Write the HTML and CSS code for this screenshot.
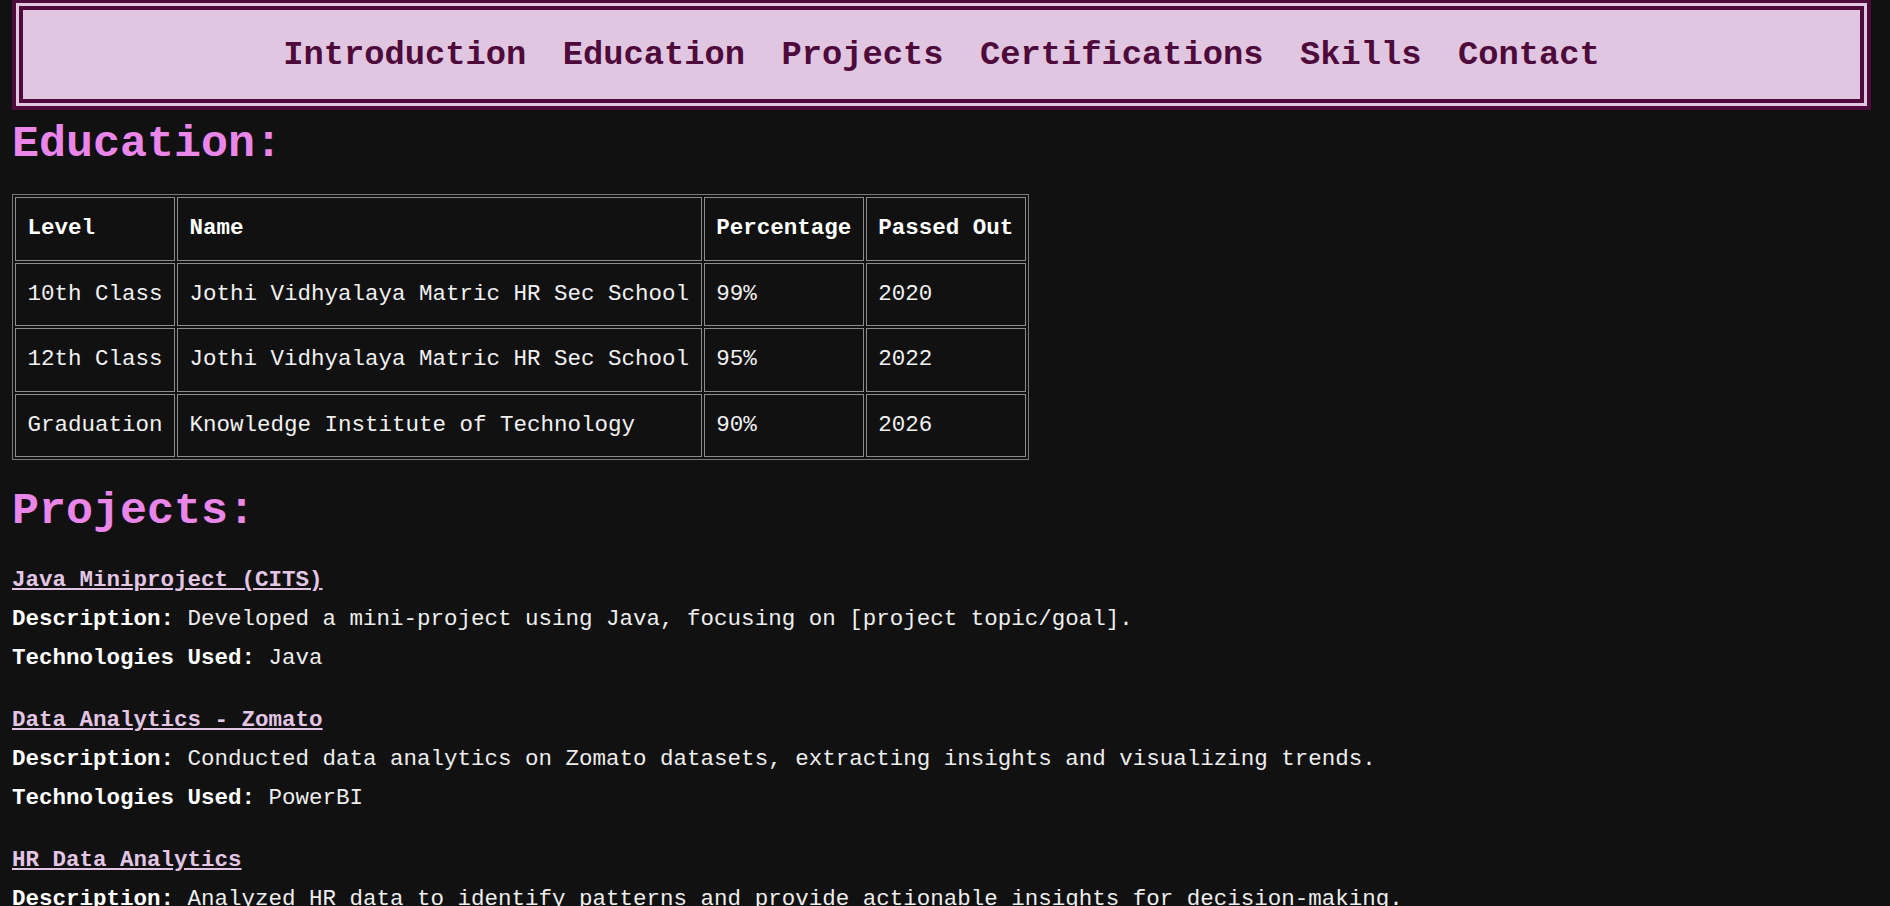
FILE: index.html
```html
<!DOCTYPE html>
<html lang="en">
<head>
<meta charset="utf-8">
<title>Portfolio</title>
<link rel="stylesheet" href="styles.css">
</head>
<body>
<header class="topbar">
  <nav class="nav">
    <a href="#intro">Introduction</a>
    <a href="#education">Education</a>
    <a href="#projects">Projects</a>
    <a href="#certifications">Certifications</a>
    <a href="#skills">Skills</a>
    <a href="#contact">Contact</a>
  </nav>
</header>
<main class="content">
  <section id="education" class="section section-education">
    <h2 class="section-title">Education:</h2>
    <table class="edu-table">
      <thead>
        <tr><th>Level</th><th>Name</th><th>Percentage</th><th>Passed Out</th></tr>
      </thead>
      <tbody>
        <tr><td>10th Class</td><td>Jothi Vidhyalaya Matric HR Sec School</td><td>99%</td><td>2020</td></tr>
        <tr><td>12th Class</td><td>Jothi Vidhyalaya Matric HR Sec School</td><td>95%</td><td>2022</td></tr>
        <tr><td>Graduation</td><td>Knowledge Institute of Technology</td><td>90%</td><td>2026</td></tr>
      </tbody>
    </table>
  </section>
  <section id="projects" class="section section-projects">
    <h2 class="section-title">Projects:</h2>
    <div class="project-list">
      <article class="project">
        <h3 class="project-title"><a href="#">Java Miniproject (CITS)</a></h3>
        <p class="project-line"><strong>Description:</strong> Developed a mini-project using Java, focusing on [project topic/goal].</p>
        <p class="project-line"><strong>Technologies Used:</strong> Java</p>
      </article>
      <article class="project">
        <h3 class="project-title"><a href="#">Data Analytics - Zomato</a></h3>
        <p class="project-line"><strong>Description:</strong> Conducted data analytics on Zomato datasets, extracting insights and visualizing trends.</p>
        <p class="project-line"><strong>Technologies Used:</strong> PowerBI</p>
      </article>
      <article class="project">
        <h3 class="project-title"><a href="#">HR Data Analytics</a></h3>
        <p class="project-line"><strong>Description:</strong> Analyzed HR data to identify patterns and provide actionable insights for decision-making.</p>
      </article>
    </div>
  </section>
</main>
</body>
</html>
```
FILE: styles.css
```css
* {
  box-sizing: border-box;
}

html,
body {
  margin: 0;
  padding: 0;
}

body {
  background: #111111;
  color: #eeeeee;
  font-family: "Courier New", "Liberation Mono", monospace;
  font-size: 22.5px;
  line-height: 25.5px;
}

.topbar {
  width: 1859px;
  margin-left: 12px;
  border: 4px solid #4d0a3b;
  border-top-width: 3px;
  padding: 3px;
  background: #e0c6e0;
}

.nav {
  height: 97px;
  border: 4px solid #4d0a3b;
  display: flex;
  justify-content: center;
  align-items: center;
  gap: 36.5px;
}

.nav a {
  font-size: 33.75px;
  line-height: 38px;
  font-weight: bold;
  color: #4d0a3b;
  text-decoration: none;
}

.content {
  padding-left: 12px;
}

.section-title {
  font-size: 45px;
  line-height: 51px;
  font-weight: bold;
  color: #ea86ea;
  margin: 0;
}

.section-education .section-title {
  margin: 9px 0 24px;
}

.section-projects .section-title {
  margin: 25.5px 0 31.75px;
}

.edu-table {
  border-collapse: separate;
  border-spacing: 2px;
  border: 1px solid #7a7a7a;
}

.edu-table th,
.edu-table td {
  border: 1px solid #8c8c8c;
  padding: 18px 11.5px;
  text-align: left;
  white-space: nowrap;
  line-height: 25.5px;
}

.edu-table th {
  color: #ffffff;
  font-weight: bold;
}

.edu-table td {
  color: #f2f2f2;
  font-weight: normal;
}

.project-list {
  display: flex;
  flex-direction: column;
  gap: 36.5px;
}

.project {
  display: flex;
  flex-direction: column;
  gap: 13.5px;
}

.project-title,
.project-line {
  margin: 0;
  font-size: 22.5px;
  line-height: 25.5px;
}

.project-title a {
  color: #e3c6e3;
  font-weight: bold;
  text-decoration: underline;
}

.project-line strong {
  color: #ffffff;
  font-weight: bold;
}
```
